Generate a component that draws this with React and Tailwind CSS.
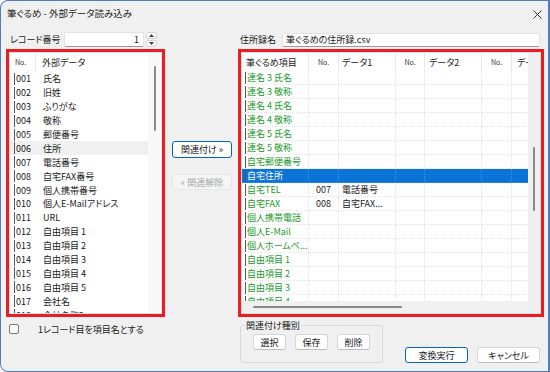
import React from "react";

const leftRows = [
  ["001", "氏名"],
  ["002", "旧姓"],
  ["003", "ふりがな"],
  ["004", "敬称"],
  ["005", "郵便番号"],
  ["006", "住所"],
  ["007", "電話番号"],
  ["008", "自宅FAX番号"],
  ["009", "個人携帯番号"],
  ["010", "個人E-Mailアドレス"],
  ["011", "URL"],
  ["012", "自由項目 1"],
  ["013", "自由項目 2"],
  ["014", "自由項目 3"],
  ["015", "自由項目 4"],
  ["016", "自由項目 5"],
  ["017", "会社名"],
  ["018", "会社名称2"],
];

const rightRows = [
  { name: "連名 3 氏名" },
  { name: "連名 3 敬称" },
  { name: "連名 4 氏名" },
  { name: "連名 4 敬称" },
  { name: "連名 5 氏名" },
  { name: "連名 5 敬称" },
  { name: "自宅郵便番号" },
  { name: "自宅住所", sel: true },
  { name: "自宅TEL", no: "007", data: "電話番号" },
  { name: "自宅FAX", no: "008", data: "自宅FAX..." },
  { name: "個人携帯電話" },
  { name: "個人E-Mail" },
  { name: "個人ホームペ..." },
  { name: "自由項目 1" },
  { name: "自由項目 2" },
  { name: "自由項目 3" },
  { name: "自由項目 4" },
];

const Button = ({ children, primary, disabled, className = "" }) => (
  <div
    className={`flex items-center justify-center rounded-[3px] border leading-none ${
      disabled
        ? "border-[#e6e6e6] bg-[#f5f5f5] text-[#a8a8a8]"
        : primary
        ? "border-[#0067c0] bg-white text-[#1a1a1a]"
        : "border-[#d6d6d6] border-b-[#bdbdbd] bg-white text-[#1a1a1a]"
    } ${className}`}
  >
    {children}
  </div>
);

const Spin = () => (
  <div className="ml-[2px] flex h-[15px] w-[11px] flex-col gap-px">
    <div className="flex flex-1 items-center justify-center rounded-[2px] border border-[#d6d6d6] bg-white">
      <svg width="5" height="3" viewBox="0 0 5 3">
        <path d="M0 3 L2.5 0 L5 3 Z" fill="#444" />
      </svg>
    </div>
    <div className="flex flex-1 items-center justify-center rounded-[2px] border border-[#d6d6d6] bg-white">
      <svg width="5" height="3" viewBox="0 0 5 3">
        <path d="M0 0 L2.5 3 L5 0 Z" fill="#444" />
      </svg>
    </div>
  </div>
);

const LeftList = () => (
  <div className="flex h-full border border-[#e3e3e3] bg-white">
    <div className="flex w-[138px] flex-col overflow-hidden">
      <div className="flex h-[19px] shrink-0 items-center">
        <div className="flex h-full w-[26px] items-center border-r border-[#e8e8e8] pl-[5px] text-[7px] text-[#333]">
          No.
        </div>
        <div className="pl-[6px]">外部データ</div>
      </div>
      {leftRows.map(([no, name]) => (
        <div
          key={no}
          className={`flex h-[13.9px] shrink-0 items-center ${no === "006" ? "bg-[#f0f0f0]" : ""}`}
        >
          <div className="ml-[4px] h-[12px] w-px bg-[#555]" />
          <div className="ml-px w-[27px]">{no}</div>
          <div className="whitespace-nowrap">{name}</div>
        </div>
      ))}
    </div>
    <div className="w-[13px] bg-[#f8f8f8]">
      <div className="ml-[6px] mt-[13px] h-[65px] w-[2px] rounded-full bg-[#8a8a8a]" />
    </div>
  </div>
);

const colW = ["w-[67px]", "w-[30px]", "w-[57px]", "w-[29px]", "w-[57px]", "w-[30px]", "w-[16px]"];

const RightList = () => (
  <div className="flex h-full border border-[#e3e3e3] bg-white">
    <div className="flex w-[286px] flex-col overflow-hidden">
      <div className="flex h-[18px] shrink-0 items-center">
        <div className={`${colW[0]} flex h-full shrink-0 items-center border-r border-[#e8e8e8] pl-[4px]`}>筆ぐるめ項目</div>
        <div className={`${colW[1]} flex h-full shrink-0 items-center justify-center border-r border-[#e8e8e8] text-[7px] text-[#333]`}>No.</div>
        <div className={`${colW[2]} flex h-full shrink-0 items-center border-r border-[#e8e8e8] pl-[3px]`}>データ1</div>
        <div className={`${colW[3]} flex h-full shrink-0 items-center justify-center border-r border-[#e8e8e8] text-[7px] text-[#333]`}>No.</div>
        <div className={`${colW[4]} flex h-full shrink-0 items-center border-r border-[#e8e8e8] pl-[4px]`}>データ2</div>
        <div className={`${colW[5]} flex h-full shrink-0 items-center justify-center border-r border-[#e8e8e8] text-[7px] text-[#333]`}>No.</div>
        <div className={`${colW[6]} flex h-full shrink-0 items-center overflow-hidden whitespace-nowrap pl-[5px]`}>データ3</div>
      </div>
      <div className="flex-1 overflow-hidden">
        {rightRows.map((r, i) => (
          <div
            key={i}
            className={`flex h-[14px] items-center ${r.sel ? "bg-[#0a74d6] text-white" : ""}`}
          >
            <div className={`${colW[0]} flex h-full shrink-0 items-center border-b border-r border-dotted ${r.sel ? "border-[#3d8fe0]" : "border-[#e4e4e4]"}`}>
              <div className="ml-[3px] h-[12px] w-px bg-[#555]" />
              <div className={`ml-px whitespace-nowrap ${r.sel ? "text-white" : "text-[#23992a]"}`}>{r.name}</div>
            </div>
            {[0, 1, 2, 3, 4, 5].map((c) => (
              <div
                key={c}
                className={`${colW[c + 1]} flex h-full shrink-0 items-center border-b border-dotted ${c < 5 ? "border-r" : ""} ${
                  r.sel ? "border-[#3d8fe0]" : "border-[#e4e4e4]"
                } ${c === 0 ? "justify-center" : "pl-[3px]"} text-[#222]`}
              >
                {c === 0 ? r.no : c === 1 ? r.data : ""}
              </div>
            ))}
          </div>
        ))}
      </div>
      <div className="flex h-[12px] shrink-0 items-center bg-[#f0f0f0]">
        <div className="ml-[11px] h-[2px] w-[149px] rounded-full bg-[#8a8a8a]" />
      </div>
    </div>
    <div className="w-[12px] bg-[#efefef]">
      <div className="ml-[5px] mt-[94px] h-[64px] w-[2px] rounded-full bg-[#8a8a8a]" />
    </div>
  </div>
);

export default function App() {
  return (
    <div className="h-[372px] w-[550px] overflow-hidden rounded-l-[8px] border border-r-2 border-[#4d7fc0] bg-[#f0f0f0] font-['Noto_Sans_CJK_JP','Noto_Sans',sans-serif] text-[9px] leading-none text-[#1a1a1a] [font-feature-settings:'palt']">
      <div className="flex h-[26px] items-center justify-between pl-[6px] pr-[6px]">
        <span className="text-[9.5px]">筆ぐるめ - 外部データ読み込み</span>
        <svg width="9" height="9" viewBox="0 0 9 9" className="mt-px">
          <path d="M0.5 0.5 L8.5 8.5 M8.5 0.5 L0.5 8.5" stroke="#333" strokeWidth="1" />
        </svg>
      </div>

      <div className="flex pt-[5px]">
        <div className="ml-[5px] flex w-[159px] flex-col">
          <div className="flex h-[15px] items-center">
            <div className="w-[58px] pl-[4px]">レコード番号</div>
            <div className="flex h-full w-[80px] items-center justify-end rounded-[2px] border border-[#e2e2e2] border-b-[#9a9a9a] bg-white pr-[4px]">
              1
            </div>
            <Spin />
          </div>
          <div className="mt-[2px] h-[268px] border-[3px] border-[#ea1c24]">
            <LeftList />
          </div>
        </div>

        <div className="flex w-[73px] flex-col">
          <Button primary className="ml-[7px] mt-[109px] h-[17px] w-[60px]">
            関連付け »
          </Button>
          <Button disabled className="ml-[7px] mt-[16px] h-[16px] w-[60px]">
            « 関連解除
          </Button>
        </div>

        <div className="flex w-[306px] flex-col">
          <div className="flex h-[15px] items-center">
            <div className="w-[44px] pl-[2px]">住所録名</div>
            <div className="flex h-[14px] w-[258px] items-center rounded-[2px] border border-[#e2e2e2] border-b-[#9a9a9a] bg-white pl-[3px]">
              筆ぐるめの住所録.csv
            </div>
          </div>
          <div className="mt-[2px] h-[268px] border-[3px] border-[#ea1c24]">
            <RightList />
          </div>
        </div>
      </div>

      <div className="flex h-[55px]">
        <div className="flex w-[239px] items-start">
          <div className="ml-[8px] mt-[7px] h-[10px] w-[10px] rounded-[2px] border border-[#7a7a7a] bg-[#fafafa]" />
          <div className="ml-[19px] mt-[8px]">1レコード目を項目名とする</div>
        </div>
        <fieldset className="mt-[4px] h-[42px] w-[143px] rounded-[3px] border border-[#dadada]">
          <legend className="ml-[4px] px-px">関連付け種別</legend>
          <div className="ml-[12px] mt-[4px] flex gap-[9px]">
            <Button className="h-[16px] w-[33px]">選択</Button>
            <Button className="h-[16px] w-[33px]">保存</Button>
            <Button className="h-[16px] w-[33px]">削除</Button>
          </div>
        </fieldset>
        <div className="ml-[22px] mt-[30px] flex gap-[9px]">
          <Button primary className="h-[16px] w-[63px]">変換実行</Button>
          <Button className="h-[16px] w-[63px]">キャンセル</Button>
        </div>
      </div>
    </div>
  );
}
